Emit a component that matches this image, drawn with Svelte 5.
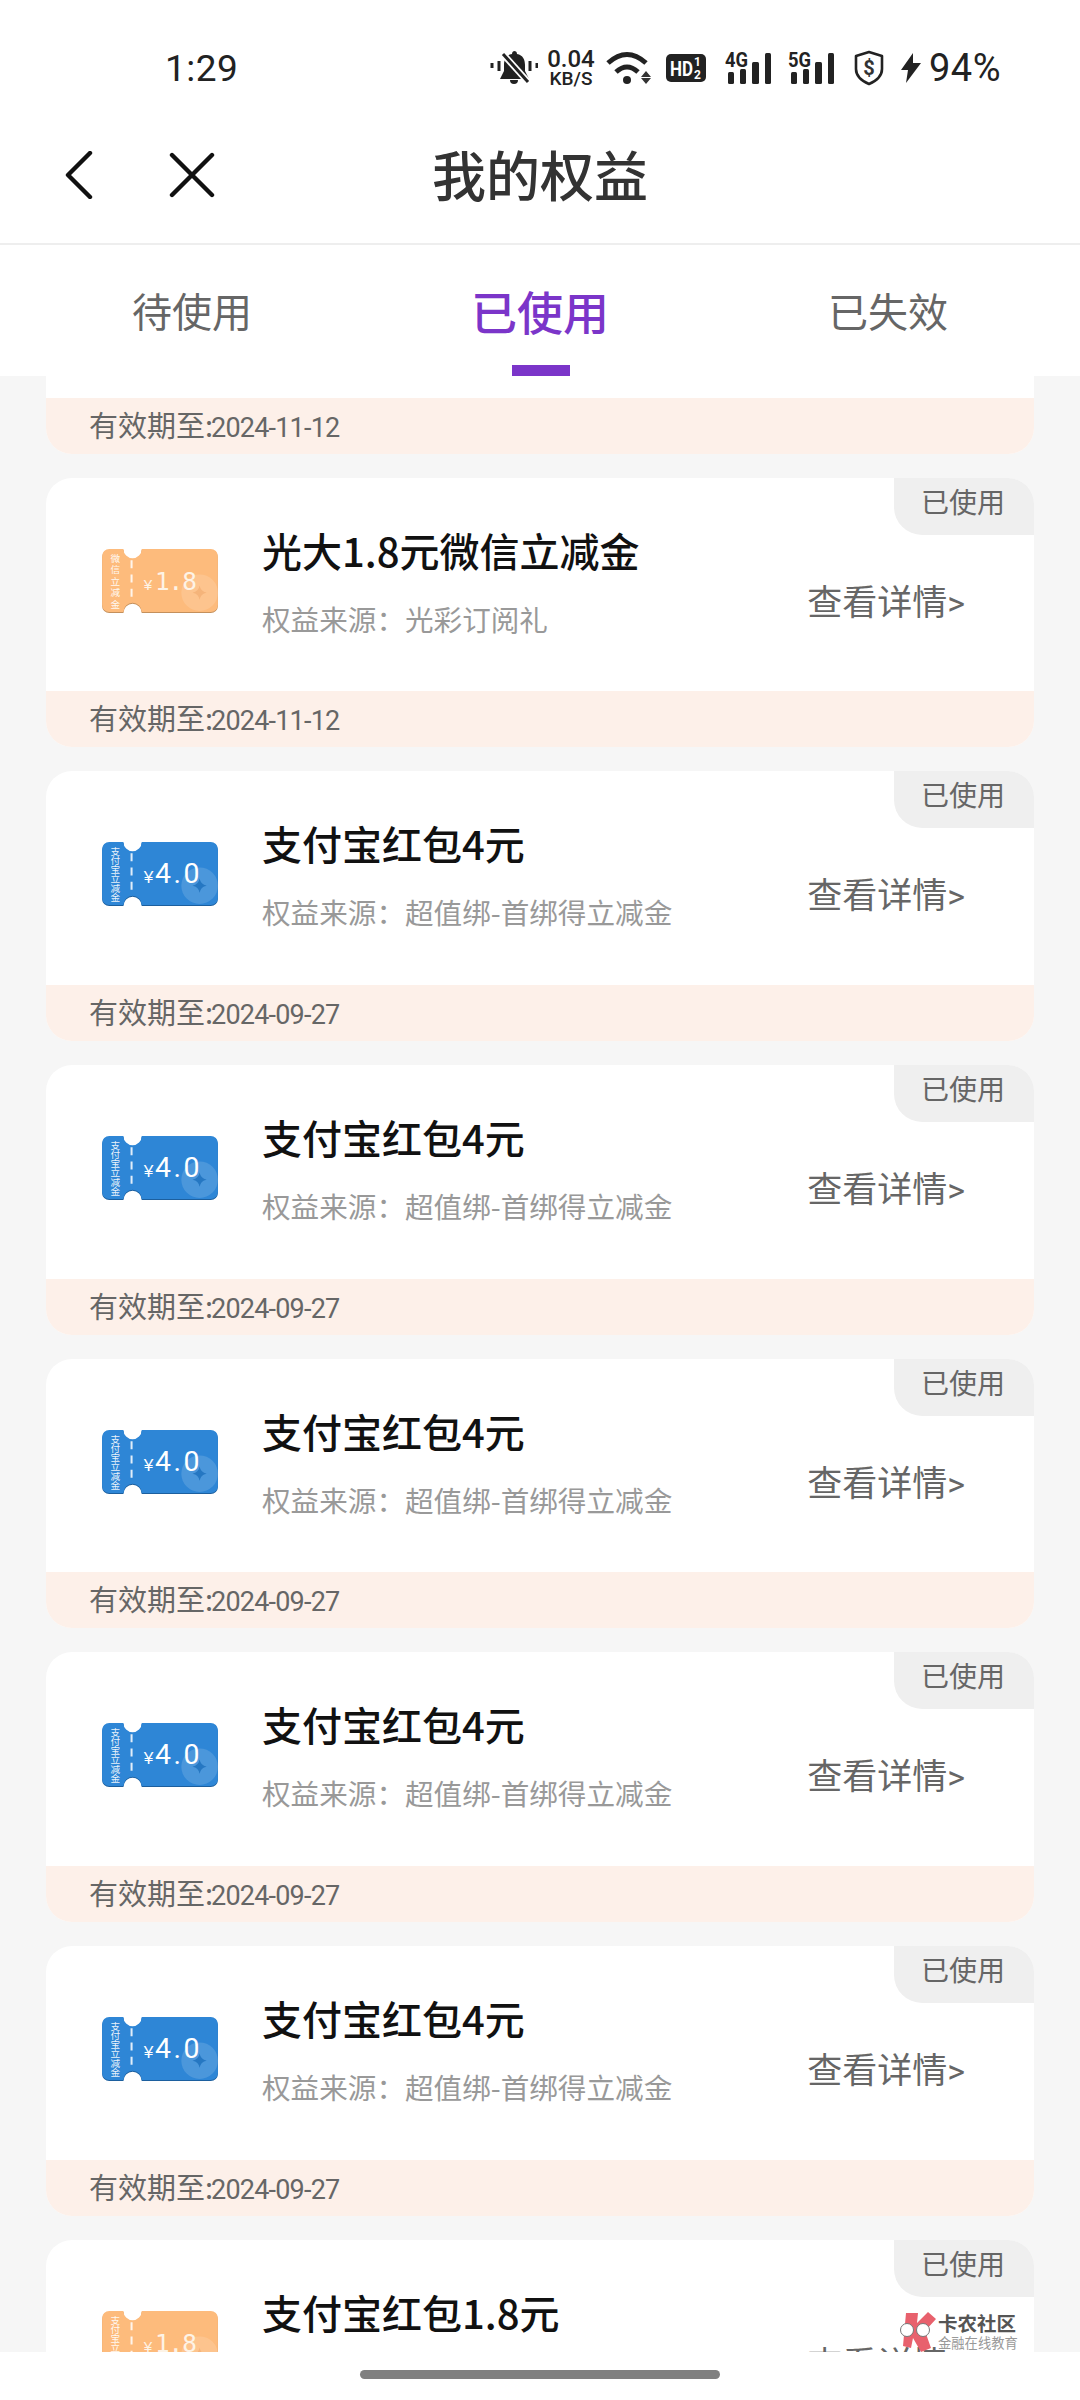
<script>
	// The list is scrolled, so the first card is pulled up under the tabs
	const tabs = ['待使用', '已使用', '已失效'];
	const source = '超值绑-首绑得立减金';
	const alipay = { title: '支付宝红包4元', source, date: '2024-09-27', side: '支付宝立减金', amount: '4.0', kind: 'blue' };
	const cards = [
		{ title: '光大1.8元微信立减金', source: '光彩订阅礼', date: '2024-11-12', side: '微信立减金', amount: '1.8', kind: 'orange' },
		{ title: '光大1.8元微信立减金', source: '光彩订阅礼', date: '2024-11-12', side: '微信立减金', amount: '1.8', kind: 'orange' },
		{ ...alipay },
		{ ...alipay },
		{ ...alipay },
		{ ...alipay },
		{ ...alipay },
		{ title: '支付宝红包1.8元', source, date: '2024-09-27', side: '支付宝立减金', amount: '1.8', kind: 'orange' }
	];
	const ticket =
		'M8 1H22A9 9 0 0 0 40 1H108A7 7 0 0 1 115 8V56A7 7 0 0 1 108 63H40A9 9 0 0 0 22 63H8A7 7 0 0 1 1 56V8A7 7 0 0 1 8 1Z';
</script>

<div class="screen">
	<div class="status">
		<span class="time">1:29</span>
		<div class="icons">
			<svg class="mute" viewBox="0 0 48 34" width="48" height="34">
				<path d="M24 0a3 3 0 0 1 3 3c6 1 8 6 8 11v6l4 8H10l4-8v-6c0-5 2-10 8-11a3 3 0 0 1 2-3Z" fill="#222" />
				<path d="M20 29h8a4 4 0 0 1-8 0Z" fill="#222" />
				<path d="M12 2l27 30" stroke="#fff" stroke-width="6.5" />
				<path d="M13 3l25 28" stroke="#222" stroke-width="3" />
				<path d="M2 12v5M9 10v10M40 10v10M47 12v5" stroke="#222" stroke-width="3" />
			</svg>
			<div class="speed"><b>0.04</b><span>KB/S</span></div>
			<svg class="wifi" viewBox="0 0 46 34" width="46" height="34">
				<path d="M2 12Q21-5 40 12" fill="none" stroke="#222" stroke-width="5" />
				<path d="M10 21Q21 11 32 21" fill="none" stroke="#222" stroke-width="5" />
				<circle cx="21" cy="29" r="4" fill="#222" />
				<path d="M40 20l5 6H35ZM35 27h10l-5 6Z" fill="#333" />
			</svg>
			<svg class="hd" viewBox="0 0 40 28" width="40" height="28">
				<rect width="40" height="28" rx="5" fill="#222" />
				<text x="4" y="22" class="hd-text" textLength="23" lengthAdjust="spacingAndGlyphs">HD</text>
				<text x="28" y="12" class="hd-small">1</text>
				<text x="28" y="25" class="hd-small">2</text>
			</svg>
			{#each ['4G', '5G'] as net}
				<svg class="net" viewBox="0 0 46 32" width="46" height="32">
					<text x="0" y="15" class="net-text" textLength="23" lengthAdjust="spacingAndGlyphs">{net}</text>
					<rect x="3" y="20" width="6" height="12" rx="1.5" fill="#222" />
					<rect x="15" y="17" width="6" height="15" rx="1.5" fill="#222" />
					<rect x="27" y="10" width="7" height="22" rx="1.5" fill="#222" />
					<rect x="40" y="1" width="6" height="31" rx="1.5" fill="#222" />
				</svg>
			{/each}
			<svg class="shield" viewBox="0 0 32 36" width="32" height="36">
				<path d="M16 2l13 4v13c0 8-6 12-13 15C9 31 3 27 3 19V6Z" fill="none" stroke="#222" stroke-width="2.6" stroke-linejoin="round" />
				<text x="16" y="24.5" text-anchor="middle" class="dollar">$</text>
			</svg>
			<svg class="bolt" viewBox="0 0 20 30" width="20" height="30">
				<path d="M12 0L0 17h7L5 30l15-20h-8Z" fill="#222" />
			</svg>
			<span class="battery">94%</span>
		</div>
	</div>

	<div class="nav">
		<div class="nav-left">
			<svg viewBox="0 0 28 48" width="28" height="48">
				<path d="M25 2L3 24l22 22" fill="none" stroke="#111" stroke-width="4.4" stroke-linecap="round" stroke-linejoin="round" />
			</svg>
			<svg viewBox="0 0 46 46" width="46" height="46">
				<path d="M3 3l40 40M43 3L3 43" fill="none" stroke="#111" stroke-width="4.4" stroke-linecap="round" />
			</svg>
		</div>
		<div class="nav-title">我的权益</div>
	</div>

	<div class="tabs">
		{#each tabs as tab, i}
			<div class="tab" class:active={i === 1}>{tab}</div>
		{/each}
	</div>

	<div class="list">
		{#each cards as card}
			<div class="card">
				<div class="tag">已使用</div>
				<div class="body">
					<svg class="ticket {card.kind}" viewBox="0 0 116 64" width="118" height="65">
						<path d={ticket} class="edge" transform="translate(0 1)" />
						<path d={ticket} class="face" />
						<circle cx="97" cy="44" r="18" class="glow" />
						<path d="M97 37q1 6 7 7q-6 1-7 7q-1-6-7-7q6-1 7-7Z" class="spark" />
						<path d="M30 12V54" class="cut" />
						<text x="14" y="5" class="side" textLength="55" style="writing-mode: vertical-rl; text-orientation: upright">{card.side}</text>
						<text x="42" y="41" class="yen">¥</text>
						<text x="53" y="41" class="amount">{card.amount}</text>
					</svg>
					<div class="info">
						<div class="title">{card.title}</div>
						<div class="source">权益来源：{card.source}</div>
					</div>
					<div class="more">查看详情<span>&gt;</span></div>
				</div>
				<div class="foot">有效期至:<span>{card.date}</span></div>
			</div>
		{/each}
	</div>

	<div class="home"><span></span></div>

	<div class="mark">
		<svg viewBox="0 0 38 42" width="38" height="42">
			<path d="M7 3L19 3L18 13L29 2L37 9L26 21L32 38L22 42L14 28L12 38L4 36Z" fill="#e8616d" />
			<circle cx="8" cy="20" r="6.5" fill="#fff" stroke="#777" stroke-width="1" />
			<circle cx="24" cy="20" r="6.5" fill="#fff" stroke="#777" stroke-width="1" />
		</svg>
		<div class="mark-text">
			<b>卡农社区</b>
			<span>金融在线教育</span>
		</div>
	</div>
</div>

<style>
	:global(body) {
		margin: 0;
		background: #fff;
	}
	.screen {
		position: relative;
		width: 1080px;
		height: 2400px;
		display: flex;
		flex-direction: column;
		overflow: hidden;
		background: #f6f6f6;
		font-family: 'Noto Sans CJK SC', 'Noto Sans', sans-serif;
	}

	/* status bar */
	.status {
		flex: none;
		height: 100px;
		padding: 36px 79px 0 165px;
		display: flex;
		align-items: center;
		justify-content: space-between;
		background: #fff;
		color: #222;
		box-sizing: border-box;
	}
	.time {
		font: 400 37px Roboto, sans-serif;
		letter-spacing: 0.5px;
	}
	.icons {
		display: flex;
		align-items: center;
	}
	.mute { margin-right: 8px; }
	.speed {
		width: 50px;
		margin-right: 10px;
		display: flex;
		flex-direction: column;
		align-items: center;
		font-family: Roboto, sans-serif;
		line-height: 1;
	}
	.speed b {
		font-size: 24px;
		font-weight: 500;
		line-height: 22px;
	}
	.speed span {
		font-size: 19px;
		font-weight: 500;
		line-height: 18px;
	}
	.wifi { margin-right: 14px; }
	.hd { margin-right: 19px; }
	.net { margin-right: 17px; }
	.shield { margin-left: 2px; margin-right: 16px; }
	.bolt { margin-right: 8px; }
	.hd-text {
		font: 700 21px Roboto, sans-serif;
		fill: #fff;
	}
	.hd-small {
		font: 700 12px Roboto, sans-serif;
		fill: #fff;
	}
	.net-text {
		font: 700 20px Roboto, sans-serif;
		fill: #222;
	}
	.dollar {
		font: 700 20px Roboto, sans-serif;
		fill: #333;
	}
	.battery {
		font: 400 38px Roboto, sans-serif;
		letter-spacing: 0.5px;
	}

	/* nav */
	.nav {
		flex: none;
		position: relative;
		height: 145px;
		display: flex;
		align-items: center;
		justify-content: center;
		background: #fff;
		border-bottom: 2px solid #eee;
		box-sizing: border-box;
	}
	.nav-left {
		position: absolute;
		left: 65px;
		top: 51px;
		display: flex;
		align-items: center;
		gap: 76px;
	}
	.nav-title {
		font-size: 54px;
		font-weight: 500;
		color: #333;
		line-height: 60px;
		margin-top: 5px;
	}

	/* tabs */
	.tabs {
		flex: none;
		height: 131px;
		padding: 0 18px;
		display: grid;
		grid-template-columns: repeat(3, 1fr);
		background: #fff;
		box-sizing: border-box;
	}
	.tab {
		position: relative;
		text-align: center;
		font-size: 40px;
		line-height: 56px;
		padding-top: 37px;
		color: #666;
	}
	.tab.active {
		font-size: 46px;
		font-weight: 500;
		color: #7b35c9;
	}
	.tab.active::after {
		content: '';
		position: absolute;
		left: 50%;
		bottom: -1px;
		width: 58px;
		height: 12px;
		margin-left: -28px;
		background: #7b35c9;
	}

	/* list */
	.list {
		flex: 1;
		min-height: 0;
		overflow: hidden;
		padding: 0 46px;
	}
	.card {
		position: relative;
		height: 269.67px;
		margin-bottom: 24px;
		display: flex;
		flex-direction: column;
		border-radius: 26px;
		overflow: hidden;
		background: #fff;
	}
	.card:first-child {
		margin-top: -192px;
	}
	.tag {
		position: absolute;
		top: 0;
		right: 0;
		width: 140px;
		height: 57px;
		border-bottom-left-radius: 28px;
		background: #efefef;
		color: #666;
		font-size: 28px;
		line-height: 47px;
		text-align: center;
		box-sizing: border-box;
		padding-right: 2px;
	}
	.body {
		flex: 1;
		display: flex;
		align-items: flex-start;
	}
	.ticket {
		flex: none;
		margin: 70px 43px 0 55px;
	}
	.face { fill: #2e86d6; }
	.edge { fill: #1c5f9e; }
	.glow { fill: rgba(255, 255, 255, 0.14); }
	.spark { fill: #2577c2; }
	.cut {
		fill: none;
		stroke: rgba(255, 255, 255, 0.85);
		stroke-width: 2;
		stroke-dasharray: 8 6;
	}
	.orange .face { fill: #fdbb7c; }
	.orange .edge { fill: #c4905c; }
	.orange .spark { fill: #f5b47a; }
	.side {
		font-size: 9.5px;
		fill: rgba(255, 255, 255, 0.92);
	}
	.yen {
		font: 400 17px 'Liberation Sans', sans-serif;
		fill: #fff;
	}
	.amount {
		font: 400 28px Roboto, sans-serif;
		letter-spacing: 2.5px;
		fill: #fff;
	}
	.orange .amount {
		font: 400 24px 'DejaVu Sans Mono', monospace;
		letter-spacing: -1px;
		fill: #fdf3e6;
	}
	.orange .yen {
		font-size: 15px;
		fill: #fdf3e6;
	}
	.info {
		padding-top: 47px;
	}
	.title {
		font-size: 40px;
		font-weight: 500;
		line-height: 50px;
		color: #111;
		white-space: nowrap;
	}
	.source {
		margin-top: 24px;
		font-size: 28.6px;
		line-height: 40px;
		color: #999;
		white-space: nowrap;
	}
	.more {
		position: absolute;
		right: 69px;
		top: 99px;
		font-size: 35px;
		line-height: 46px;
		color: #666;
	}
	.more span {
		font-family: Roboto, sans-serif;
		font-size: 34px;
	}
	.foot {
		flex: none;
		height: 56px;
		padding-left: 43px;
		background: #fdf0e9;
		color: #666;
		font-size: 29px;
		line-height: 52px;
	}
	.foot span {
		font-family: Roboto, sans-serif;
		font-size: 27px;
		letter-spacing: -0.8px;
		margin-left: -2px;
	}

	/* bottom */
	.home {
		flex: none;
		height: 48px;
		display: flex;
		justify-content: center;
		background: #fff;
	}
	.home span {
		width: 360px;
		height: 9px;
		margin-top: 18px;
		border-radius: 5px;
		background: #808080;
	}
	.mark {
		position: absolute;
		left: 899px;
		top: 2310px;
		display: flex;
		align-items: flex-start;
		gap: 1px;
	}
	.mark-text {
		display: flex;
		flex-direction: column;
		padding-top: 1px;
	}
	.mark-text b {
		font-size: 19.5px;
		font-weight: 700;
		line-height: 24px;
		color: #555;
	}
	.mark-text span {
		font-size: 13.3px;
		line-height: 16px;
		color: #999;
	}
</style>
